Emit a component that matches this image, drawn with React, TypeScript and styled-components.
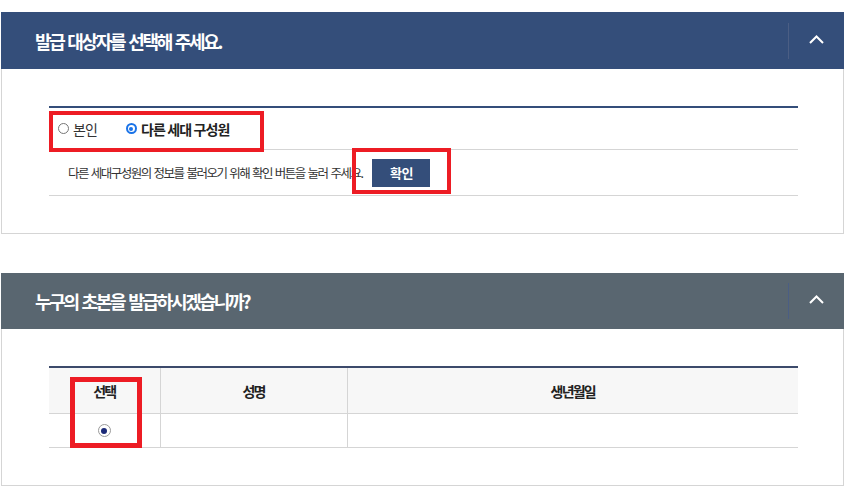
import React from "react";
import styled, { createGlobalStyle } from "styled-components";

const GlobalStyle = createGlobalStyle`
  html, body {
    margin: 0;
    padding: 0;
    background: #ffffff;
  }
  body {
    font-family: "Noto Sans CJK KR", "Noto Sans", sans-serif;
    color: #333;
  }
`;

export default function App() {
  return (
    <>
      <GlobalStyle />
      <Page>
        {/* 발급 대상자 선택 */}
        <Panel>
          <PanelHeader $tone="navy">
            <PanelTitle>발급 대상자를 선택해 주세요.</PanelTitle>
            <ToggleButton aria-label="접기">
              <Chevron />
            </ToggleButton>
          </PanelHeader>
          <PanelBody>
            <FormBox>
              <RadioRow>
                <RadioOption>
                  <RadioDot $checked={false} />
                  <RadioLabel>본인</RadioLabel>
                </RadioOption>
                <RadioOption>
                  <RadioDot $checked />
                  <RadioLabel $strong>다른 세대 구성원</RadioLabel>
                </RadioOption>
                <Highlight $left={0} $top={3} $width={215} $height={41} $thick={4} />
              </RadioRow>
              <InfoRow>
                <InfoText>다른 세대구성원의 정보를 불러오기 위해 확인 버튼을 눌러 주세요.</InfoText>
                <ButtonWrap>
                  <ConfirmButton>확인</ConfirmButton>
                  <Highlight $left={-20} $top={-11} $width={99} $height={46} $thick={4} />
                </ButtonWrap>
              </InfoRow>
            </FormBox>
          </PanelBody>
        </Panel>

        {/* 초본 발급 대상 */}
        <Panel>
          <PanelHeader $tone="slate">
            <PanelTitle>누구의 초본을 발급하시겠습니까?</PanelTitle>
            <ToggleButton aria-label="접기">
              <Chevron />
            </ToggleButton>
          </PanelHeader>
          <PanelBody>
            <TableWrap>
              <Table>
                <colgroup>
                  <col style={{ width: 111 }} />
                  <col style={{ width: 187 }} />
                  <col />
                </colgroup>
                <thead>
                  <tr>
                    <Th>선택</Th>
                    <Th>성명</Th>
                    <Th>생년월일</Th>
                  </tr>
                </thead>
                <tbody>
                  <tr>
                    <Td>
                      <TableRadio />
                    </Td>
                    <Td />
                    <Td />
                  </tr>
                </tbody>
              </Table>
              <Highlight $left={21} $top={11} $width={72} $height={71} $thick={5} />
            </TableWrap>
          </PanelBody>
        </Panel>
      </Page>
    </>
  );
}

function Chevron() {
  return (
    <svg width="15" height="9" viewBox="0 0 15 9" fill="none">
      <path d="M1 8 L7.5 1.5 L14 8" stroke="#ffffff" strokeWidth="2" />
    </svg>
  );
}

// --- Styles ---

const Page = styled.div`
  padding: 12px 0 0 1px;
  width: 843px;
  display: flex;
  flex-direction: column;
  gap: 39px;
`;

const Panel = styled.section`
  display: flex;
  flex-direction: column;
`;

const PanelHeader = styled.div<{ $tone: "navy" | "slate" }>`
  height: ${(p) => (p.$tone === "navy" ? 57 : 56)}px;
  background: ${(p) => (p.$tone === "navy" ? "#344e7a" : "#596670")};
  display: flex;
  align-items: center;
  justify-content: space-between;
  padding-left: 34px;
`;

const PanelTitle = styled.h2`
  margin: 0;
  color: #ffffff;
  font-size: 18px;
  font-weight: 700;
  letter-spacing: -2.3px;
  word-spacing: 2px;
  line-height: 1;
`;

const ToggleButton = styled.button`
  width: 56px;
  height: 36px;
  background: transparent;
  border: 0;
  border-left: 1px solid #4b5e84;
  padding: 0 0 3px 0;
  display: flex;
  align-items: center;
  justify-content: center;
  cursor: pointer;
`;

const PanelBody = styled.div`
  border: 1px solid #d5d5d5;
  border-top: 0;
  padding: 37px 45px 37px 47px;
`;

const FormBox = styled.div`
  border-top: 2px solid #344e7a;
`;

const RadioRow = styled.div`
  position: relative;
  height: 41px;
  border-bottom: 1px solid #d5d5d5;
  display: flex;
  align-items: center;
  padding-left: 9px;
  gap: 29px;
`;

const RadioOption = styled.label`
  display: flex;
  align-items: center;
  gap: 4px;
  cursor: pointer;
`;

const RadioDot = styled.span<{ $checked: boolean }>`
  width: 11px;
  height: 11px;
  border-radius: 50%;
  box-sizing: border-box;
  border: ${(p) => (p.$checked ? "2px solid #1a73e8" : "1px solid #767676")};
  background: #fff;
  position: relative;

  &::after {
    content: "";
    display: ${(p) => (p.$checked ? "block" : "none")};
    position: absolute;
    inset: 1.5px;
    border-radius: 50%;
    background: #1a73e8;
  }
`;

const RadioLabel = styled.span<{ $strong?: boolean }>`
  font-size: 14px;
  font-weight: ${(p) => (p.$strong ? 700 : 400)};
  letter-spacing: -0.9px;
  color: ${(p) => (p.$strong ? "#222" : "#333")};
`;

const InfoRow = styled.div`
  height: 45px;
  border-bottom: 1px solid #d5d5d5;
  display: flex;
  align-items: center;
  padding-left: 19px;
  gap: 10px;
`;

const InfoText = styled.p`
  margin: 0;
  font-size: 12.5px;
  letter-spacing: -1.5px;
  word-spacing: 1.5px;
  color: #333;
`;

const ButtonWrap = styled.div`
  position: relative;
  display: flex;
`;

const ConfirmButton = styled.button`
  width: 58px;
  height: 28px;
  background: #344e7a;
  color: #ffffff;
  border: 0;
  font-family: inherit;
  font-size: 13px;
  font-weight: 700;
  letter-spacing: -0.5px;
  cursor: pointer;
`;

const Highlight = styled.span<{
  $left: number;
  $top: number;
  $width: number;
  $height: number;
  $thick: number;
}>`
  position: absolute;
  left: ${(p) => p.$left}px;
  top: ${(p) => p.$top}px;
  width: ${(p) => p.$width}px;
  height: ${(p) => p.$height}px;
  box-sizing: border-box;
  border: ${(p) => p.$thick}px solid #ed1c24;
  pointer-events: none;
`;

const TableWrap = styled.div`
  position: relative;
`;

const Table = styled.table`
  width: 100%;
  border-collapse: collapse;
  table-layout: fixed;
  border-top: 2px solid #3c4a6b;
`;

const Th = styled.th`
  height: 45px;
  background: #f7f7f7;
  border-bottom: 1px solid #d5d5d5;
  border-left: 1px solid #d5d5d5;
  font-size: 14px;
  font-weight: 700;
  letter-spacing: -1.8px;
  color: #222;
  text-align: center;
  padding: 0;

  &:first-child {
    border-left: 0;
  }
`;

const Td = styled.td`
  height: 33px;
  border-bottom: 1px solid #d5d5d5;
  border-left: 1px solid #d5d5d5;
  text-align: center;
  vertical-align: middle;
  padding: 0;

  &:first-child {
    border-left: 0;
  }
`;

const TableRadio = styled.span`
  display: block;
  margin: 0 auto;
  width: 13px;
  height: 13px;
  box-sizing: border-box;
  border-radius: 50%;
  border: 1px solid #9a9a9a;
  position: relative;

  &::after {
    content: "";
    position: absolute;
    inset: 2.5px;
    border-radius: 50%;
    background: #1c2a78;
  }
`;
